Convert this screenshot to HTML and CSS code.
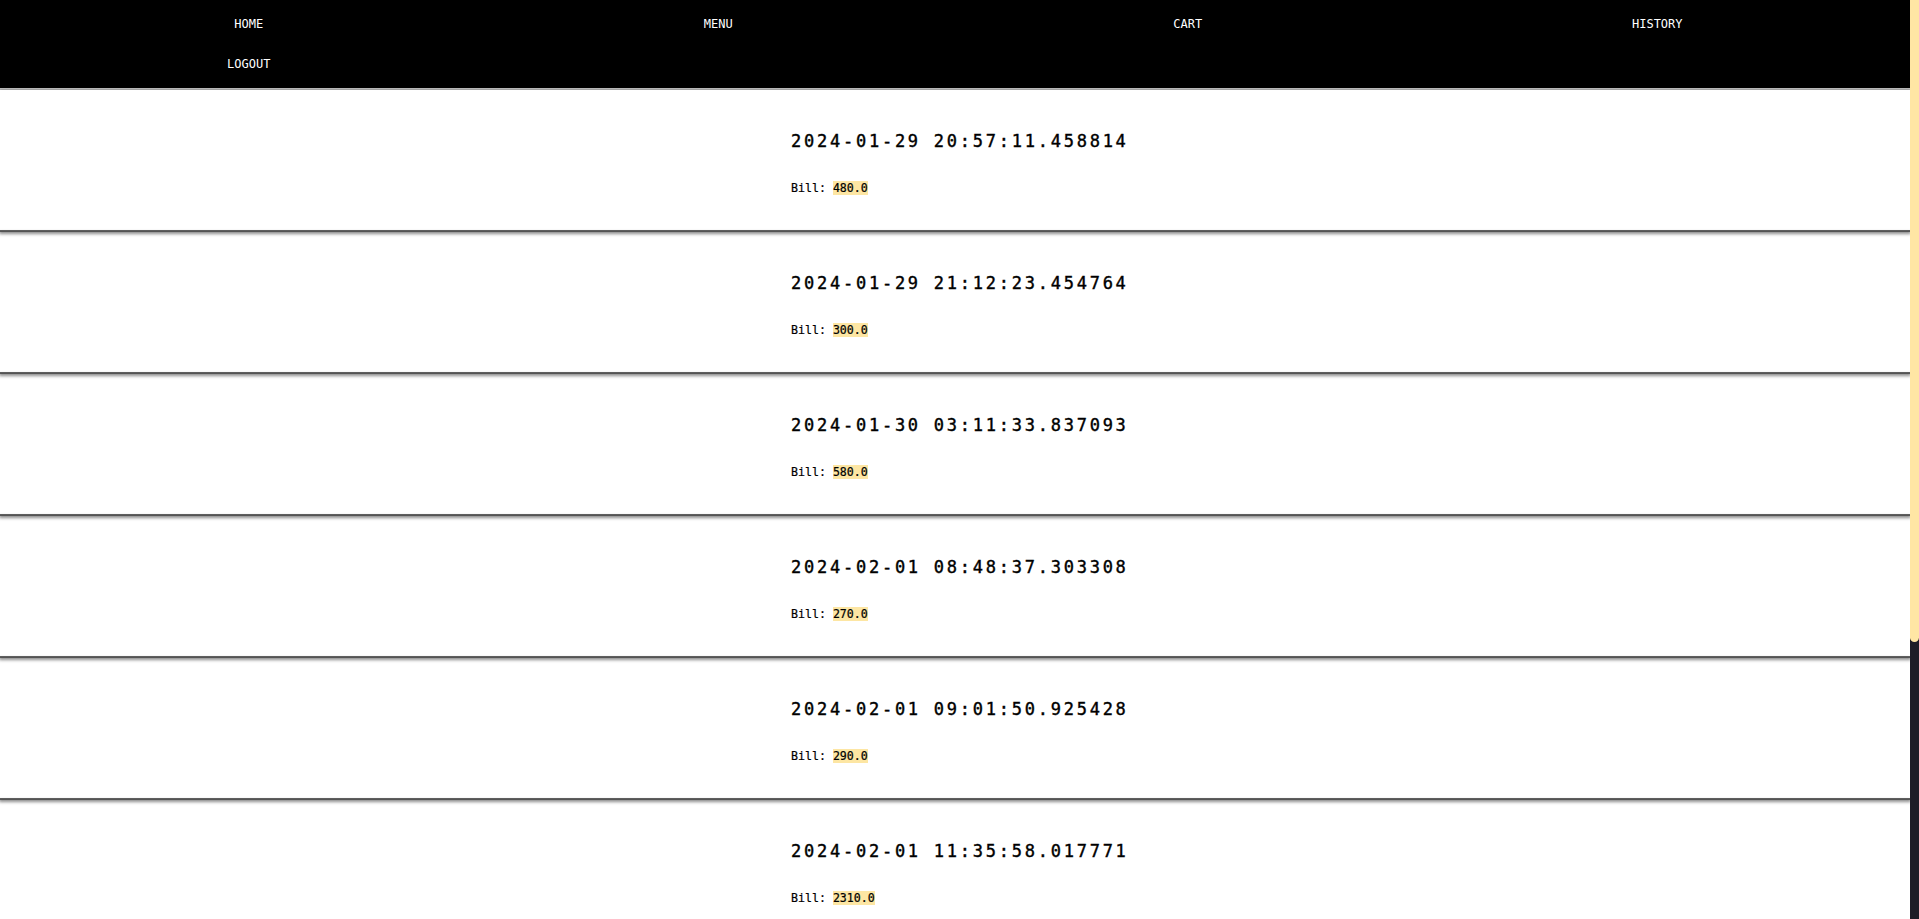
FILE: index.html
```html
<!DOCTYPE html>
<html lang="en">
<head>
<meta charset="utf-8">
<title>History</title>
<link rel="stylesheet" href="styles.css">
</head>
<body>
<nav class="nav">
  <a class="nav-link" href="#">HOME</a>
  <a class="nav-link" href="#">MENU</a>
  <a class="nav-link" href="#">CART</a>
  <a class="nav-link" href="#">HISTORY</a>
  <a class="nav-link" href="#">LOGOUT</a>
</nav>
<main class="history">
  <section class="order">
    <div class="order-inner">
      <h2 class="order-date">2024-01-29 20:57:11.458814</h2>
      <p class="order-bill">Bill: <span class="amount">480.0</span></p>
    </div>
  </section>
  <section class="order">
    <div class="order-inner">
      <h2 class="order-date">2024-01-29 21:12:23.454764</h2>
      <p class="order-bill">Bill: <span class="amount">300.0</span></p>
    </div>
  </section>
  <section class="order">
    <div class="order-inner">
      <h2 class="order-date">2024-01-30 03:11:33.837093</h2>
      <p class="order-bill">Bill: <span class="amount">580.0</span></p>
    </div>
  </section>
  <section class="order">
    <div class="order-inner">
      <h2 class="order-date">2024-02-01 08:48:37.303308</h2>
      <p class="order-bill">Bill: <span class="amount">270.0</span></p>
    </div>
  </section>
  <section class="order">
    <div class="order-inner">
      <h2 class="order-date">2024-02-01 09:01:50.925428</h2>
      <p class="order-bill">Bill: <span class="amount">290.0</span></p>
    </div>
  </section>
  <section class="order">
    <div class="order-inner">
      <h2 class="order-date">2024-02-01 11:35:58.017771</h2>
      <p class="order-bill">Bill: <span class="amount">2310.0</span></p>
    </div>
  </section>
  <section class="order">
    <div class="order-inner">
      <h2 class="order-date">2024-02-02 13:20:41.552310</h2>
      <p class="order-bill">Bill: <span class="amount">350.0</span></p>
    </div>
  </section>
  <section class="order">
    <div class="order-inner">
      <h2 class="order-date">2024-02-03 19:44:05.118902</h2>
      <p class="order-bill">Bill: <span class="amount">420.0</span></p>
    </div>
  </section>
</main>
<div class="scrollbar" aria-hidden="true"><div class="scrollbar-thumb"></div></div>
</body>
</html>
```
FILE: styles.css
```css
html::-webkit-scrollbar {
  width: 0;
  height: 0;
}

body {
  margin: 0;
  padding-right: 9px;
  background: #ffffff;
  color: #000000;
  font-family: "DejaVu Sans Mono", "Liberation Mono", monospace;
}

.nav {
  display: grid;
  grid-template-columns: repeat(4, 1fr);
  grid-auto-rows: 16px;
  row-gap: 24px;
  height: 56px;
  padding: 16px 18px 16px 14px;
  background: #000000;
  border-bottom: 2px solid #c6c6c6;
}

.nav-link {
  color: #ffffff;
  text-decoration: none;
  text-align: center;
  font-size: 12px;
  line-height: 16px;
}

.history {
  padding-bottom: 89px;
}

.order {
  display: flex;
  flex-direction: column;
  align-items: center;
  padding: 40px 0 34px;
  border-bottom: 2px solid #666666;
  box-shadow: 0 1px 3px 1px rgba(0, 0, 0, 0.45);
  position: relative;
}

.order-inner {
  width: 345px;
  padding-left: 17px;
}

.order-date {
  margin: 0;
  font-size: 17px;
  line-height: 22px;
  font-weight: normal;
  letter-spacing: 2.75px;
  white-space: nowrap;
  -webkit-text-stroke: 0.4px #000;
}

.order-bill {
  margin: 28px 0 0;
  font-size: 11.6px;
  line-height: 16px;
  -webkit-text-stroke: 0.2px #000;
}

.amount {
  background: #fde6a3;
}

.scrollbar {
  position: fixed;
  top: 0;
  right: 0;
  bottom: 0;
  width: 9px;
  background: #1d1d27;
}

.scrollbar-thumb {
  height: 642px;
  background: #ffe6a4;
  border-radius: 0 0 5px 5px;
}
```
